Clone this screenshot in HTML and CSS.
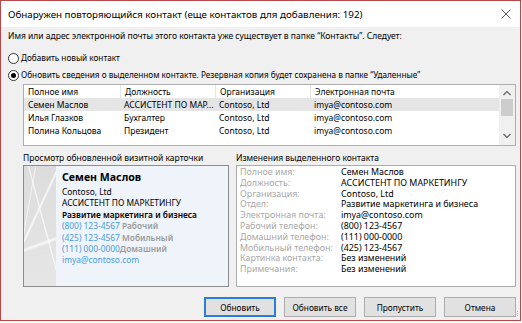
FILE: index.html
```html
<!DOCTYPE html>
<html lang="ru">
<head>
<meta charset="utf-8">
<link rel="stylesheet" href="styles.css">
</head>
<body>
<div class="window">
  <div class="titlebar">
    <span class="title">Обнаружен повторяющийся контакт (еще контактов для добавления: 192)</span>
    <svg class="close" width="12" height="12" viewBox="0 0 12 12"><path d="M1.5 1.5 L10.5 10.5 M10.5 1.5 L1.5 10.5" stroke="#444" stroke-width="0.9" fill="none"/></svg>
  </div>
  <div class="content">
    <p class="prompt">Имя или адрес электронной почты этого контакта уже существует в папке “Контакты”. Следует:</p>
    <div class="radio first"><span class="circle"></span><span>Добавить новый контакт</span></div>
    <div class="radio checked"><span class="circle"></span><span>Обновить сведения о выделенном контакте. Резервная копия будет сохранена в папке “Удаленные”</span></div>
    <div class="list">
      <div class="rows">
        <div class="row head"><span>Полное имя</span><span>Должность</span><span>Организация</span><span>Электронная почта</span></div>
        <div class="row sel"><span>Семен Маслов</span><span>АССИСТЕНТ ПО МАР...</span><span>Contoso, Ltd</span><span>imya@contoso.com</span></div>
        <div class="row"><span>Илья Глазков</span><span>Бухгалтер</span><span>Contoso, Ltd</span><span>imya@contoso.com</span></div>
        <div class="row"><span>Полина Кольцова</span><span>Президент</span><span>Contoso, Ltd</span><span>imya@contoso.com</span></div>
      </div>
      <div class="scrollbar">
        <svg class="arrow" width="16" height="13" viewBox="0 0 16 13"><path d="M4.5 8 L8 4.5 L11.5 8" stroke="#606060" stroke-width="1.2" fill="none"/></svg>
        <div class="thumb"></div>
        <div class="track"></div>
        <svg class="arrow" width="16" height="13" viewBox="0 0 16 13"><path d="M4.5 5 L8 8.5 L11.5 5" stroke="#606060" stroke-width="1.2" fill="none"/></svg>
      </div>
    </div>
    <div class="panels">
      <div class="panel card-panel">
        <div class="panel-label">Просмотр обновленной визитной карточки</div>
        <div class="card">
          <div class="stripe"></div>
          <div class="card-body">
            <div class="c-name">Семен Маслов</div>
            <div class="c-line">Contoso, Ltd</div>
            <div class="c-line">АССИСТЕНТ ПО МАРКЕТИНГУ</div>
            <div class="c-line semi">Развитие маркетинга и бизнеса</div>
            <div class="c-line"><span class="link">(800) 123-4567</span> <span class="tag">Рабочий</span></div>
            <div class="c-line"><span class="link">(425) 123-4567</span> <span class="tag">Мобильный</span></div>
            <div class="c-line"><span class="link">(111) 000-0000</span><span class="tag">Домашний</span></div>
            <div class="c-line"><span class="link">imya@contoso.com</span></div>
          </div>
        </div>
      </div>
      <div class="panel changes-panel">
        <div class="panel-label">Изменения выделенного контакта</div>
        <div class="changes">
          <div class="ch"><span class="k">Полное имя:</span><span>Семен Маслов</span></div>
          <div class="ch"><span class="k">Должность:</span><span>АССИСТЕНТ ПО МАРКЕТИНГУ</span></div>
          <div class="ch"><span class="k">Организация:</span><span>Contoso, Ltd</span></div>
          <div class="ch"><span class="k">Отдел:</span><span>Развитие маркетинга и бизнеса</span></div>
          <div class="ch"><span class="k">Электронная почта:</span><span>imya@contoso.com</span></div>
          <div class="ch"><span class="k">Рабочий телефон:</span><span>(800) 123-4567</span></div>
          <div class="ch"><span class="k">Домашний телефон:</span><span>(111) 000-0000</span></div>
          <div class="ch"><span class="k">Мобильный телефон:</span><span>(425) 123-4567</span></div>
          <div class="ch"><span class="k">Картинка контакта:</span><span>Без изменений</span></div>
          <div class="ch"><span class="k">Примечания:</span><span>Без изменений</span></div>
        </div>
      </div>
    </div>
    <div class="buttons">
      <button class="btn default">Обновить</button>
      <button class="btn">Обновить все</button>
      <button class="btn">Пропустить</button>
      <button class="btn">Отмена</button>
    </div>
  </div>
  <svg class="grip" width="8" height="8" viewBox="0 0 8 8"><g fill="#b4b4b4"><rect x="6" y="0" width="1" height="1"/><rect x="4" y="2" width="1" height="1"/><rect x="6" y="2" width="1" height="1"/><rect x="2" y="4" width="1" height="1"/><rect x="4" y="4" width="1" height="1"/><rect x="6" y="4" width="1" height="1"/></g></svg>
</div>
</body>
</html>
```
FILE: styles.css
```css
* { box-sizing: border-box; }
html, body { margin: 0; padding: 0; background: #ffffff; }
body { font-family: "Noto Sans", "Open Sans", sans-serif; color: #000; }

.window {
  position: relative;
  width: 521px;
  height: 321px;
  border: 1px solid #b9474a;
  display: flex;
  flex-direction: column;
  background: #f0f0f0;
}

.titlebar {
  height: 26px;
  background: #fff;
  display: flex;
  align-items: center;
  justify-content: space-between;
  padding: 0 8px 0 7px;
  flex: none;
}
.title { font-size: 9.8px; color: #000; }
.close { display: block; }

.content {
  flex: 1;
  padding: 2px 4px 0 7px;
  display: flex;
  flex-direction: column;
  font-size: 8.5px;
}

.prompt { margin: 0; height: 14px; line-height: 14px; }

.radio {
  display: flex;
  align-items: center;
  height: 14px;
  line-height: 14px;
  gap: 2px;
  font-size: 8.2px;
}
.radio.first { margin-top: 8px; }
.radio.checked { margin-top: 3px; }
.circle {
  width: 11px; height: 11px;
  border: 1px solid #333;
  border-radius: 50%;
  background: #fff;
  position: relative;
  flex: none;
}
.checked .circle::after {
  content: "";
  position: absolute;
  left: 2px; top: 2px;
  width: 5px; height: 5px;
  border-radius: 50%;
  background: #000;
}

.list {
  margin: 2px 0 0 15px;
  height: 62px;
  border: 1px solid #adadad;
  background: #fff;
  display: flex;
  flex: none;
}
.rows { flex: 1; }
.row {
  display: grid;
  grid-template-columns: 96px 95px 95px 1fr;
  height: 13px;
  line-height: 13px;
}
.row span { padding-left: 4px; white-space: nowrap; overflow: hidden; }
.row.head span + span { border-left: 1px solid #e5e5e5; }
.row.sel { background: #e5e5e5; }

.scrollbar {
  width: 16px;
  flex: none;
  background: #f0f0f0;
  display: flex;
  flex-direction: column;
  padding: 2px 0 3px;
}
.arrow { display: block; flex: none; }
.thumb { height: 17px; margin: -1px 2px 0; background: #cdcdcd; flex: none; }
.track { flex: 1; }

.panels {
  display: flex;
  gap: 7px;
  margin-left: 15px;
  margin-top: 5px;
  flex: none;
}
.panel-label { height: 14px; line-height: 14px; }
.card-panel { width: 206px; }
.changes-panel { flex: 1; }

.card {
  height: 122px;
  border: 1px solid #8c8c8c;
  display: flex;
  background: #eef4fa;
}
.stripe {
  width: 32px;
  flex: none;
  background:
    linear-gradient(115deg, transparent 38%, rgba(255,255,255,0.85) 40%, transparent 42%),
    linear-gradient(75deg, transparent 55%, rgba(255,255,255,0.75) 57%, transparent 59%),
    linear-gradient(160deg, transparent 62%, rgba(255,255,255,0.75) 64%, transparent 66%),
    linear-gradient(100deg, transparent 20%, rgba(255,255,255,0.6) 22%, transparent 24%),
    linear-gradient(180deg, #dcdcdc, #e6e6e6);
}
.card-body { padding: 3px 0 0 6px; }
.c-name { font-weight: 700; font-size: 10.6px; line-height: 17px; }
.c-line { line-height: 11.4px; font-size: 8.4px; white-space: nowrap; }
.c-line.semi { font-weight: 600; }
.link { color: #4a9ae2; }
.tag { color: #9a9a9a; font-weight: 600; }

.changes {
  height: 122px;
  border: 1px solid #adadad;
  background: #fff;
  padding: 1px 0 0 3px;
}
.ch { display: grid; grid-template-columns: 101px 1fr; line-height: 10.8px; font-size: 8.9px; white-space: nowrap; }
.ch .k { color: #a8a8a8; }

.buttons {
  display: flex;
  justify-content: flex-end;
  gap: 8px;
  margin-top: 10px;
  flex: none;
}
.btn {
  width: 72px;
  height: 20px;
  background: #e1e1e1;
  border: 1px solid #adadad;
  font-family: inherit;
  font-size: 8.3px;
  color: #000;
  padding: 0;
}
.btn.default { border: 2px solid #2a7fd4; }

.grip { position: absolute; right: 1px; bottom: 1px; }
```
